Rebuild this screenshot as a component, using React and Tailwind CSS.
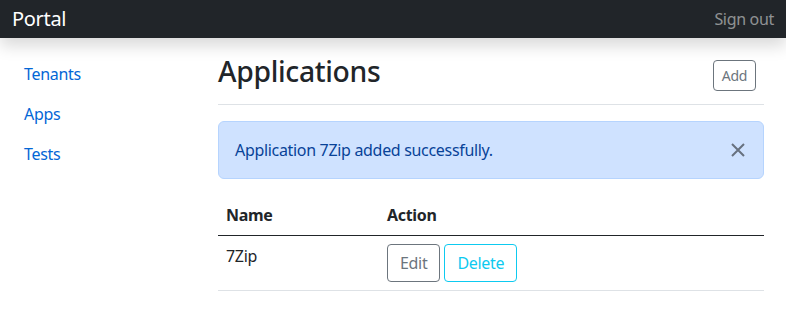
import React, { useState } from 'react';

const FONT = { fontFamily: '"Noto Sans", "Open Sans", Roboto, sans-serif' };

const apps = [{ id: 1, name: '7Zip' }];

const App = () => {
  const [showAlert, setShowAlert] = useState(true);

  return (
    <div className="min-h-[322px] bg-white tracking-[-0.02em] text-[#212529]" style={FONT}>
      {/* Top navbar */}
      <nav className="relative z-10 flex h-[38px] items-center justify-between bg-[#212529] px-3 shadow-[0_8px_16px_rgba(0,0,0,0.15)]">
        <a href="#" className="text-[20px] leading-[30px] text-white">Portal</a>
        <a href="#" className="text-[16px] text-white/50">Sign out</a>
      </nav>

      <div className="flex">
        {/* Sidebar */}
        <aside className="w-[218px] shrink-0 pt-4">
          <ul className="flex flex-col">
            {['Tenants', 'Apps', 'Tests'].map((item) => (
              <li key={item}>
                <a href="#" className="block px-6 py-2 text-[16px] leading-6 text-[#0366d6]">{item}</a>
              </li>
            ))}
          </ul>
        </aside>

        {/* Main */}
        <main className="flex-1 pr-[22px]">
          <div className="mb-4 flex items-center justify-between border-b border-[#dee2e6] pt-4 pb-2">
            <h1 className="mb-2 text-[28.3px] font-medium leading-[34px]">Applications</h1>
            <button className="mr-2 rounded-[4px] border border-[#6c757d] px-2 py-1 text-[14px] leading-[21px] text-[#6c757d]">
              Add
            </button>
          </div>

          {showAlert && (
            <div className="relative mb-4 rounded-[6px] border border-[#b6d4fe] bg-[#cfe2ff] py-4 pr-12 pl-4 text-[16px] leading-6 text-[#084298]">
              Application 7Zip added successfully.
              <button
                onClick={() => setShowAlert(false)}
                className="absolute top-0 right-0 flex h-full w-[50px] items-center justify-center text-black/50"
              >
                <svg width="16" height="16" viewBox="0 0 16 16" fill="none" stroke="currentColor" strokeWidth="2">
                  <path d="M2 2l12 12M14 2L2 14" />
                </svg>
              </button>
            </div>
          )}

          <table className="w-full border-collapse text-[16px] leading-6">
            <thead>
              <tr className="border-b border-[#212529]">
                <th className="w-[161px] p-2 text-left font-bold">Name</th>
                <th className="p-2 text-left font-bold">Action</th>
              </tr>
            </thead>
            <tbody>
              {apps.map((app) => (
                <tr key={app.id} className="border-b border-[#dee2e6]">
                  <td className="p-2 align-top">{app.name}</td>
                  <td className="p-2">
                    <div className="flex gap-1">
                      <button className="rounded-[4px] border border-[#6c757d] px-3 py-[6px] text-[#6c757d]">Edit</button>
                      <button className="rounded-[4px] border border-[#0dcaf0] px-3 py-[6px] text-[#0dcaf0]">Delete</button>
                    </div>
                  </td>
                </tr>
              ))}
            </tbody>
          </table>
        </main>
      </div>
    </div>
  );
};

export default App;
